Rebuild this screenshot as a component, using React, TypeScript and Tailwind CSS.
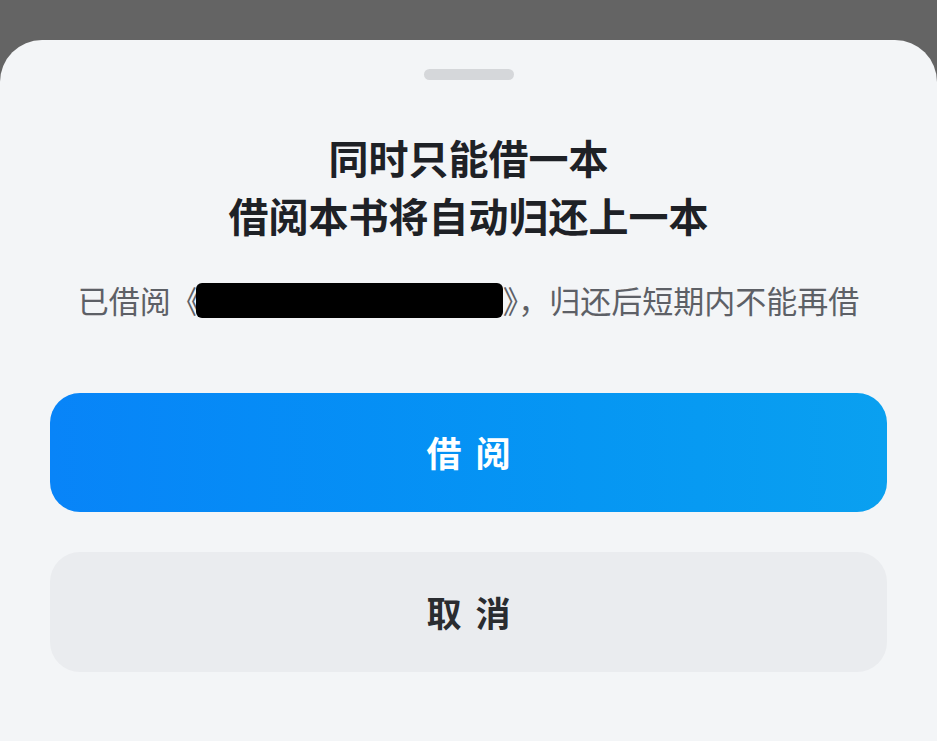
export default function App() {
  return (
    <div
      className="w-[937px] h-[741px] bg-[#646464] pt-[40px] overflow-hidden"
      style={{ fontFamily: '"Noto Sans CJK SC", "Noto Sans", sans-serif' }}
    >
      <div className="h-full bg-[#f3f5f7] rounded-t-[42px] flex flex-col items-center px-[50px]">
        <div className="mt-[29px] w-[90px] h-[11px] rounded-full bg-[#d5d7da]" />
        <div className="mt-[48px] text-center text-[40px] leading-[58px] font-bold text-[#1e2126]">
          <div>同时只能借一本</div>
          <div>借阅本书将自动归还上一本</div>
        </div>
        <div className="mt-[36px] w-full flex items-center justify-center text-[31px] leading-[40px] text-[#5d6066] whitespace-nowrap">
          <span>已借阅《</span>
          <span className="inline-block w-[307px] h-[35px] bg-black rounded-[6px] -ml-[6px]" />
          <span>》，归还后短期内不能再借</span>
        </div>
        <button className="mt-[73px] w-full h-[119px] rounded-[30px] bg-gradient-to-r from-[#0884f8] to-[#0aa0f0] text-white text-[35px] font-bold tracking-[14px] pl-[14px] flex items-center justify-center">
          借阅
        </button>
        <button className="mt-[40px] w-full h-[120px] rounded-[30px] bg-[#eaecef] text-[#2a2c30] text-[35px] font-bold tracking-[14px] pl-[14px] flex items-center justify-center">
          取消
        </button>
      </div>
    </div>
  );
}
